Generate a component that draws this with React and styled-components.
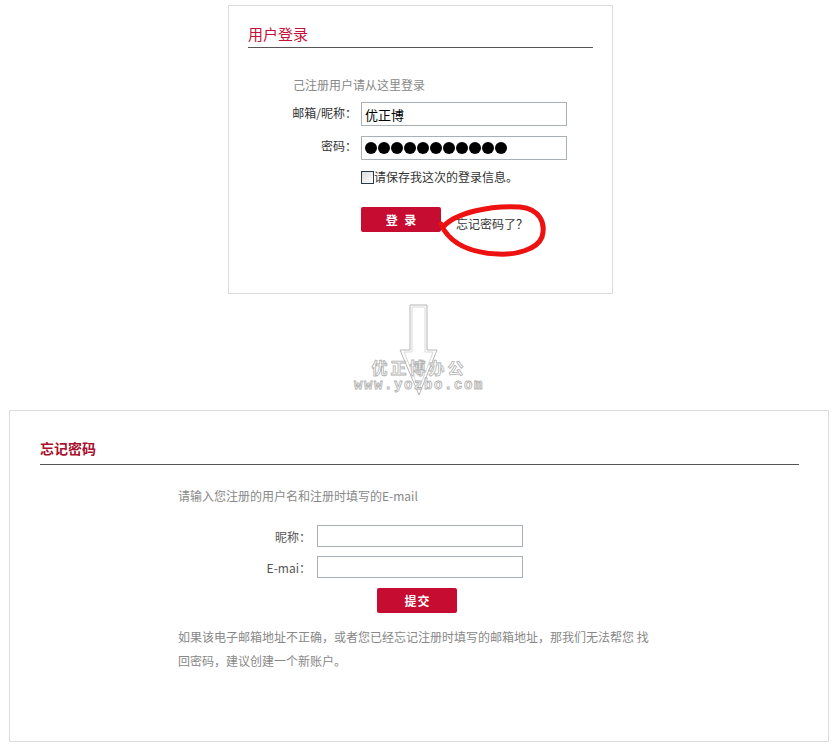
import React from "react";
import styled, { createGlobalStyle } from "styled-components";

const Global = createGlobalStyle`
  html, body { margin: 0; padding: 0; background: #fff; }
  body {
    font-family: "Noto Sans CJK SC", "Liberation Sans", sans-serif;
    font-size: 12px;
    color: #333;
  }
`;

const Page = styled.div`
  width: 838px;
  display: flex;
  flex-direction: column;
  align-items: center;
`;

const LoginPanel = styled.section`
  box-sizing: border-box;
  align-self: flex-start;
  width: 385px;
  height: 289px;
  margin: 5px 0 0 228px;
  border: 1px solid #dcdcdc;
  padding: 18px 19px 0 19px;
`;

const PanelTitle = styled.h2`
  margin: 0;
  font-size: ${(p) => p.$size}px;
  line-height: ${(p) => p.$lh}px;
  font-weight: ${(p) => (p.$bold ? 700 : 400)};
  color: ${(p) => p.$color};
  padding-bottom: ${(p) => p.$pb}px;
  border-bottom: 1px solid #555;
`;

const Intro = styled.p`
  margin: ${(p) => p.$mt}px 0 0 ${(p) => p.$indent}px;
  font-size: 12px;
  line-height: 16px;
  color: #888;
`;

const Row = styled.div`
  display: flex;
  align-items: center;
  margin-top: ${(p) => p.$mt}px;
`;

const Label = styled.label`
  width: ${(p) => p.$w}px;
  margin-right: ${(p) => p.$gap}px;
  text-align: right;
  font-size: 12px;
  color: ${(p) => p.$color || "#333"};
  white-space: nowrap;
  position: relative;
  top: ${(p) => p.$dy || 0}px;
`;

const Field = styled.div`
  box-sizing: border-box;
  width: 206px;
  height: ${(p) => p.$h}px;
  border: 1px solid #a9b0b6;
  background: #fff;
  display: flex;
  align-items: center;
  padding-left: 3px;
  font-size: 13px;
  color: #000;
`;

const Dots = styled.div`
  display: flex;
  gap: 1px;
`;

const Dot = styled.span`
  width: 12px;
  height: 12px;
  border-radius: 50%;
  background: #000;
`;

const CheckRow = styled.div`
  display: flex;
  align-items: center;
  margin-top: 10px;
  margin-left: ${(p) => p.$indent}px;
  font-size: 12px;
  color: #333;
  line-height: 14px;
`;

const CheckBox = styled.span`
  box-sizing: border-box;
  width: 13px;
  height: 13px;
  border: 1px solid #2b3a4a;
  background: linear-gradient(135deg, #dcdcdc, #fff);
`;

const ButtonRow = styled.div`
  display: flex;
  align-items: flex-start;
  margin-top: ${(p) => p.$mt}px;
  margin-left: ${(p) => p.$indent}px;
`;

const RedButton = styled.button`
  width: 80px;
  height: 25px;
  border: none;
  border-radius: 2px;
  background: #c60c30;
  color: #fff;
  font-family: "Noto Sans CJK SC", sans-serif;
  font-weight: 700;
  font-size: 12px;
  letter-spacing: ${(p) => p.$ls || 0}px;
  text-indent: ${(p) => p.$ls || 0}px;
  padding: 0;
  cursor: pointer;
`;

const ForgotWrap = styled.span`
  position: relative;
  margin-left: 15px;
  margin-top: 9px;
  font-size: 12px;
  line-height: 16px;
  color: #333;
`;

const Scribble = styled.svg`
  position: absolute;
  left: -16px;
  top: -14px;
  overflow: visible;
  pointer-events: none;
`;

const ArrowZone = styled.div`
  position: relative;
  width: 160px;
  height: 116px;
  display: flex;
  justify-content: center;
`;

const Watermark = styled.div`
  position: absolute;
  left: 0;
  right: 0;
  top: ${(p) => p.$top}px;
  text-align: center;
  font-family: ${(p) => p.$font};
  font-size: ${(p) => p.$size}px;
  line-height: ${(p) => p.$size}px;
  letter-spacing: ${(p) => p.$ls}px;
  font-weight: 700;
  color: #fff;
  -webkit-text-stroke: 0.8px #b0b0b0;
`;

const ResetPanel = styled.section`
  box-sizing: border-box;
  width: 820px;
  height: 332px;
  border: 1px solid #dcdcdc;
  padding: 29px 29px 0 30px;
`;

const ResetBody = styled.div`
  padding-left: 138px;
`;

const Note = styled.p`
  margin: 12px 0 0 0;
  width: 480px;
  font-size: 12px;
  line-height: 24px;
  color: #888;
`;

const Arrow = () => (
  <svg width="50" height="116" viewBox="0 0 50 116">
    <polygon
      points="16,11 33,11 33,56 43,56 25,101 6,56 16,56"
      fill="#fff"
      stroke="#b5b5b5"
      strokeWidth="1"
    />
    <polygon
      points="18,13 31,13 31,58 39,58 25,95 10,58 18,58"
      fill="none"
      stroke="#d8d8d8"
      strokeWidth="1"
    />
  </svg>
);

export default function App() {
  return (
    <>
      <Global />
      <Page>
        <LoginPanel>
          <PanelTitle $size={15} $lh={20} $pb={3} $color="#c2123a">
            用户登录
          </PanelTitle>
          <Intro $mt={29} $indent={45}>己注册用户请从这里登录</Intro>
          <Row $mt={9}>
            <Label $w={109} $gap={4} $dy={-2}>邮箱/昵称：</Label>
            <Field $h={24}>优正博</Field>
          </Row>
          <Row $mt={10}>
            <Label $w={109} $gap={4} $dy={-3}>密码：</Label>
            <Field $h={24}>
              <Dots>
                {Array.from({ length: 11 }).map((_, i) => (
                  <Dot key={i} />
                ))}
              </Dots>
            </Field>
          </Row>
          <CheckRow $indent={113}>
            <CheckBox />
            <span>请保存我这次的登录信息。</span>
          </CheckRow>
          <ButtonRow $mt={23} $indent={113}>
            <RedButton $ls={2}>登 录</RedButton>
            <ForgotWrap>
              忘记密码了？
              <Scribble width="112" height="60" viewBox="0 0 112 60">
                <path
                  d="M3 25 C15 11, 50 3, 80 5 C100 7, 106 21, 102 35 C97 48, 75 53, 58 52 C35 51, 15 45, 4 28 L1 22"
                  fill="none"
                  stroke="#ee1111"
                  strokeWidth="5"
                  strokeLinecap="round"
                  strokeLinejoin="round"
                />
              </Scribble>
            </ForgotWrap>
          </ButtonRow>
        </LoginPanel>

        <ArrowZone>
          <Arrow />
          <Watermark $top={65} $size={16} $ls={3} $font={'"Noto Sans CJK SC", sans-serif'}>
            优正博办公
          </Watermark>
          <Watermark $top={84} $size={14} $ls={1.6} $font={'"Liberation Mono", monospace'}>
            www.yozbo.com
          </Watermark>
        </ArrowZone>

        <ResetPanel>
          <PanelTitle $size={14} $lh={16} $pb={8} $bold $color="#a8102c">
            忘记密码
          </PanelTitle>
          <ResetBody>
            <Intro $mt={23} $indent={0}>请输入您注册的用户名和注册时填写的E-mail</Intro>
            <Row $mt={21}>
              <Label $w={133} $gap={6} $color="#555">昵称：</Label>
              <Field $h={22} />
            </Row>
            <Row $mt={9}>
              <Label $w={133} $gap={6} $color="#555">E-mai：</Label>
              <Field $h={22} />
            </Row>
            <ButtonRow $mt={10} $indent={199}>
              <RedButton $ls={1}>提交</RedButton>
            </ButtonRow>
            <Note>
              如果该电子邮箱地址不正确，或者您已经忘记注册时填写的邮箱地址，那我们无法帮您 找<br />
              回密码，建议创建一个新账户。
            </Note>
          </ResetBody>
        </ResetPanel>
      </Page>
    </>
  );
}
